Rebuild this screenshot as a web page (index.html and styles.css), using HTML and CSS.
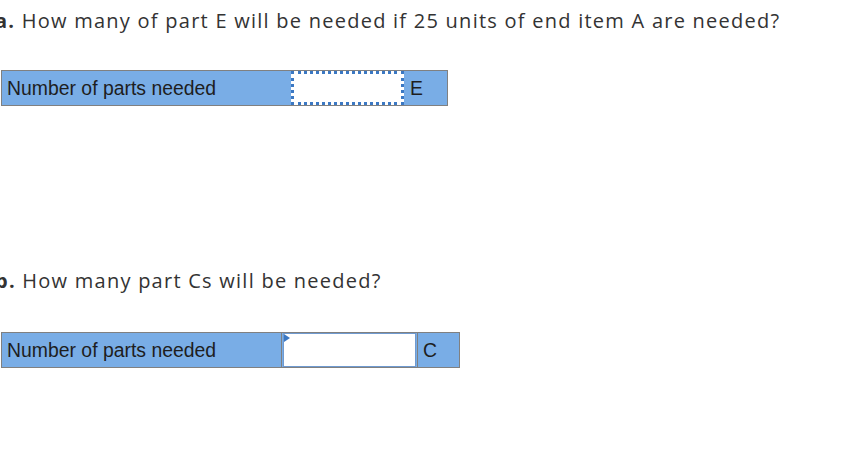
FILE: index.html
```html
<!DOCTYPE html>
<html>
<head>
<meta charset="utf-8">
<link rel="stylesheet" href="styles.css">
</head>
<body>
<div class="page">
  <section class="part part-a">
    <p class="question"><b>a.</b> How many of part E will be needed if 25 units of end item A are needed?</p>
    <div class="answer answer-a">
      <div class="label">Number of parts needed</div>
      <div class="field dotted"></div>
      <div class="unit">E</div>
    </div>
  </section>
  <section class="part part-b">
    <p class="question"><b>b.</b> How many part Cs will be needed?</p>
    <div class="answer answer-b">
      <div class="label">Number of parts needed</div>
      <div class="field plain"><span class="flag"></span></div>
      <div class="unit">C</div>
    </div>
  </section>
</div>
</body>
</html>
```
FILE: styles.css
```css
html, body {
  margin: 0;
  padding: 0;
  background: #fff;
}
.page {
  margin-left: -5px;
}
.question {
  margin: 0;
  padding-top: 8px;
  font-family: "Open Sans", "Liberation Sans", sans-serif;
  font-size: 20px;
  letter-spacing: 1.25px;
  line-height: 26px;
  color: #333;
}
.question b {
  font-weight: 700;
}
.answer {
  display: flex;
  margin-left: 6px;
  border: 1px solid #808080;
  background: #79ade6;
  height: 34px;
  font-family: "Liberation Sans", Arial, sans-serif;
  font-size: 19.4px;
  color: #1e1e1e;
}
.answer-a {
  margin-top: 36px;
  width: 445px;
}
.part-b {
  margin-top: 154px;
}
.answer-b {
  margin-top: 38px;
  width: 457px;
}
.label {
  display: flex;
  align-items: center;
  padding-left: 5px;
}
.answer-a .label {
  width: 284px;
}
.answer-b .label {
  width: 274px;
  border-right: 1px solid #808080;
}
.field {
  position: relative;
  background: #fff;
  box-sizing: border-box;
}
.field.dotted {
  width: 113px;
  border: 3px dotted #3b78c3;
}
.field.plain {
  width: 133px;
  border: 1px solid #6f9ad0;
  margin: 0 1px 0 1px;
  box-shadow: inset 0 0 0 1px #fff;
}
.flag {
  position: absolute;
  left: 0;
  top: 0;
  width: 0;
  height: 0;
  border-top: 4px solid transparent;
  border-bottom: 4px solid transparent;
  border-left: 6px solid #3b78c3;
}
.unit {
  display: flex;
  align-items: center;
  padding-left: 6px;
  flex: 1;
}
.answer-b .unit {
  border-left: 1px solid #808080;
  padding-left: 5px;
}
```
